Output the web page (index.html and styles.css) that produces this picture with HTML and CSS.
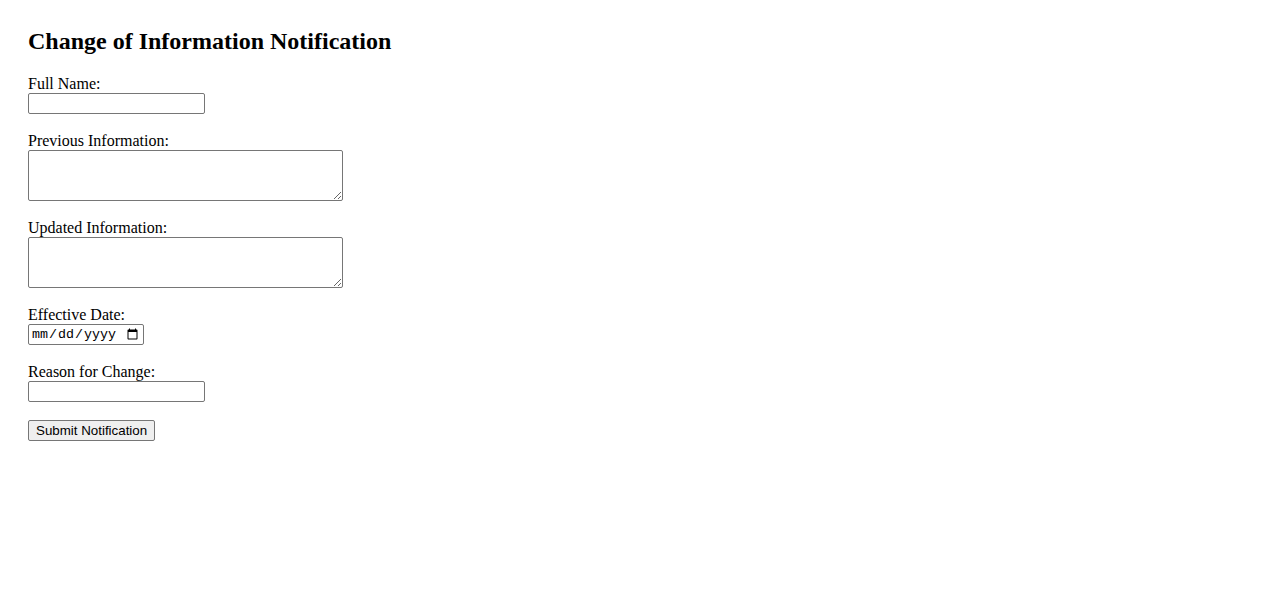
FILE: index.html
```html
<!DOCTYPE html>
<html lang="en">
<head>
<meta charset="UTF-8">
<title>Change of Information Notification</title>
<link rel="stylesheet" href="styles.css">
</head>
<body>
<div class="page">
<h2 class="title">Change of Information Notification</h2>
<form class="form">
<label class="label" for="fullName">Full Name:</label><br>
<input class="text" type="text" id="fullName" name="fullName"><br><br>
<label class="label" for="prev">Previous Information:</label><br>
<textarea class="area" id="prev" name="prev"></textarea><br><br>
<label class="label" for="upd">Updated Information:</label><br>
<textarea class="area" id="upd" name="upd"></textarea><br><br>
<label class="label" for="date">Effective Date:</label><br>
<input class="date" type="date" id="date" name="date"><br><br>
<label class="label" for="reason">Reason for Change:</label><br>
<input class="text" type="text" id="reason" name="reason"><br><br>
<button class="btn" type="submit">Submit Notification</button>
</form>
</div>
</body>
</html>
```
FILE: styles.css
```css
body {
  margin: 0;
  font-family: "Liberation Serif", "Times New Roman", serif;
  font-size: 16px;
  color: #000;
  background: #fff;
}
.page {
  padding: 28px;
}
.title {
  margin: 0 0 20px;
  font-size: 24px;
  font-weight: bold;
}
.form {
  margin: 0;
}
.text {
  font-family: "Liberation Sans", Arial, sans-serif;
  font-size: 13.333px;
  width: 177px;
  height: 21px;
  box-sizing: border-box;
  border: 1px solid #767676;
  border-radius: 2px;
  padding: 1px 2px;
  margin: 0;
}
.area {
  font-family: "Liberation Mono", monospace;
  font-size: 13.333px;
  width: 315px;
  height: 51px;
  box-sizing: border-box;
  border: 1px solid #767676;
  border-radius: 2px;
  padding: 2px;
  margin: 0;
  vertical-align: top;
}
.date {
  font-family: "Liberation Mono", monospace;
  font-size: 13.333px;
  width: 116px;
  height: 21px;
  box-sizing: border-box;
  border: 1px solid #767676;
  border-radius: 2px;
  padding: 1px 2px;
  margin: 0;
}
.btn {
  font-family: "Liberation Sans", Arial, sans-serif;
  font-size: 13.333px;
  height: 21px;
  padding: 1px 7px;
  border: 1px solid #767676;
  border-radius: 2px;
  background: #efefef;
  color: #000;
  margin: 0;
}
```
